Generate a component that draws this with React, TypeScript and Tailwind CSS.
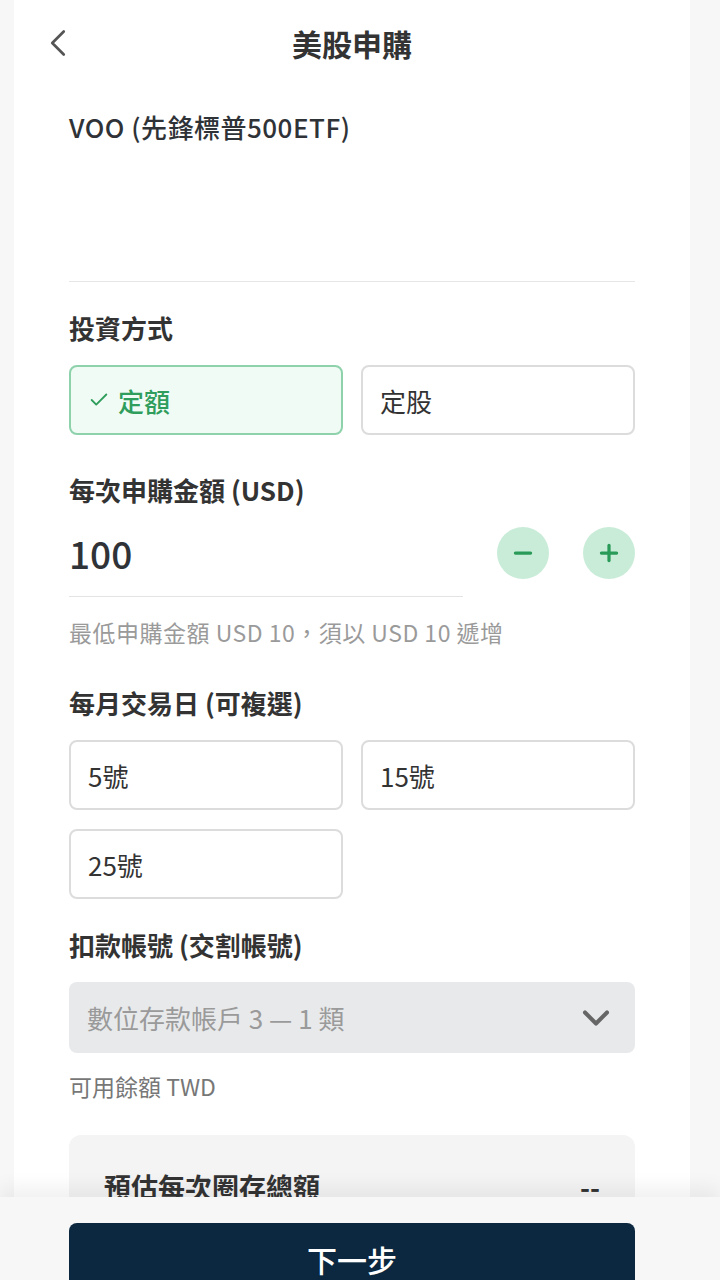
import { useState } from 'react';
import { ChevronLeft, ChevronDown, Check, Minus, Plus } from 'lucide-react';

const font = { fontFamily: '"Noto Sans CJK TC", "Noto Sans", sans-serif' };

const OptionBox = ({ label, selected, onClick }: { label: string; selected?: boolean; onClick?: () => void }) => (
  <button
    onClick={onClick}
    className={
      selected
        ? 'h-[70px] rounded-lg border-2 border-[#8dd2ab] bg-[#f1fbf5] flex items-center px-[17px] gap-[8px] text-[#2f9d5c] text-[26px] font-medium'
        : 'h-[70px] rounded-lg border-2 border-[#dcdcdc] bg-white flex items-center px-[17px] text-[#333] text-[26px]'
    }
  >
    {selected && <Check size={22} strokeWidth={2} className="text-[#2f9d5c]" />}
    <span>{label}</span>
  </button>
);

const App = () => {
  const [method, setMethod] = useState('amount');
  const [amount, setAmount] = useState(100);
  const [days, setDays] = useState<number[]>([]);

  const toggleDay = (d: number) =>
    setDays(days.includes(d) ? days.filter((x) => x !== d) : [...days, d]);

  return (
    <div className="h-[1280px] w-[720px] overflow-hidden bg-[#f7f7f7] flex flex-col" style={font}>
      <div className="flex-1 min-h-0 overflow-hidden">
        <div className="ml-[14px] w-[676px] bg-white min-h-full">
          {/* Header */}
          <div className="relative h-[86px] flex items-center justify-center">
            <ChevronLeft size={46} strokeWidth={1.4} className="absolute left-[21px] top-[20px] text-[#555]" />
            <h1 className="text-[30px] font-bold text-[#333]">美股申購</h1>
          </div>

          <div className="px-[55px]">
            <div className="mt-[25px] text-[26px] leading-[32px] font-medium tracking-[0.5px] text-[#2f3337]">VOO (先鋒標普500ETF)</div>
            <div className="h-[138px]" />
            <div className="h-px bg-[#e6e6e6]" />

            <div className="mt-[31px] text-[26px] leading-[30px] font-bold text-[#333]">投資方式</div>
            <div className="mt-[22px] grid grid-cols-2 gap-[18px]">
              <OptionBox label="定額" selected={method === 'amount'} onClick={() => setMethod('amount')} />
              <OptionBox label="定股" selected={method === 'shares'} onClick={() => setMethod('shares')} />
            </div>

            <div className="mt-[40px] text-[26px] leading-[30px] font-bold text-[#333]">每次申購金額 (USD)</div>
            <div className="mt-[22px] flex items-start justify-between">
              <div className="w-[394px] h-[70px] border-b border-[#e3e3e3] text-[37px] leading-[52px] font-medium text-[#2f3337]">
                {amount}
              </div>
              <div className="flex gap-[34px]">
                <button
                  onClick={() => setAmount(Math.max(10, amount - 10))}
                  className="w-[52px] h-[52px] rounded-full bg-[#c9ecd8] flex items-center justify-center"
                >
                  <Minus size={26} strokeWidth={3} className="text-[#2a9a58]" />
                </button>
                <button
                  onClick={() => setAmount(amount + 10)}
                  className="w-[52px] h-[52px] rounded-full bg-[#c9ecd8] flex items-center justify-center"
                >
                  <Plus size={26} strokeWidth={3} className="text-[#2a9a58]" />
                </button>
              </div>
            </div>
            <div className="mt-[21px] text-[23px] leading-[28px] tracking-[0.5px] text-[#9a9a9a]">最低申購金額 USD 10，須以 USD 10 遞增</div>

            <div className="mt-[42px] text-[26px] leading-[30px] font-bold text-[#333]">每月交易日 (可複選)</div>
            <div className="mt-[22px] grid grid-cols-2 gap-x-[18px] gap-y-[19px]">
              {[5, 15, 25].map((d) => (
                <OptionBox key={d} label={`${d}號`} selected={days.includes(d)} onClick={() => toggleDay(d)} />
              ))}
            </div>

            <div className="mt-[31px] text-[26px] leading-[30px] font-bold text-[#333]">扣款帳號 (交割帳號)</div>
            <div className="mt-[22px] h-[71px] rounded-lg bg-[#e8e9eb] flex items-center justify-between pl-[18px] pr-[17px]">
              <span className="text-[26px] text-[#9a9a9a]">數位存款帳戶 3 — 1 類</span>
              <ChevronDown size={44} strokeWidth={2.2} className="text-[#666]" />
            </div>
            <div className="mt-[20px] text-[23px] leading-[26px] text-[#777]">可用餘額 TWD</div>

            <div className="mt-[36px] rounded-xl bg-[#f4f4f5] h-[120px] px-[35px] pt-[37px] flex justify-between">
              <span className="text-[27px] leading-[30px] font-bold text-[#333]">預估每次圈存總額</span>
              <span className="text-[27px] leading-[30px] font-bold text-[#333]">--</span>
            </div>
          </div>
        </div>
      </div>

      {/* Footer */}
      <div className="relative shrink-0 h-[83px] bg-[#f7f7f7] shadow-[0_-10px_18px_rgba(0,0,0,0.06)] px-[69px] pt-[26px]">
        <button className="w-[566px] h-[72px] rounded-lg bg-[#0b2840] text-white text-[30px] font-medium">下一步</button>
      </div>
    </div>
  );
};

export default App;
